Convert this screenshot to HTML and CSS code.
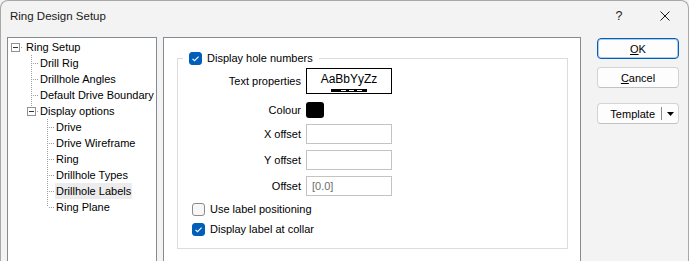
FILE: index.html
```html
<!doctype html>
<html lang="en">
    <head>
        <meta charset="UTF-8" />
        <meta name="viewport" content="width=device-width, initial-scale=1.0" />
        <title>Ring Design Setup</title>
        <link rel="stylesheet" href="styles.css">
    </head>
    <body>
        <div class="window">
            <div class="titlebar">
                <span class="title">Ring Design Setup</span>
                <span class="caption-btn help">?</span>
                <span class="caption-btn close">
                    <svg width="10" height="10" viewBox="0 0 10 10">
                        <path d="M0.5 0.5 L9.5 9.5 M9.5 0.5 L0.5 9.5" stroke="#1a1a1a" stroke-width="1" fill="none" />
                    </svg>
                </span>
            </div>

            <div class="content">
                <!-- Options tree -->
                <div class="tree">
                    <div class="node root"><span class="cell"><span class="expander"></span></span><span class="label">Ring Setup</span></div>
                    <div class="node"><span class="cell"></span><span class="cell tee"></span><span class="label">Drill Rig</span></div>
                    <div class="node"><span class="cell"></span><span class="cell tee"></span><span class="label">Drillhole Angles</span></div>
                    <div class="node"><span class="cell"></span><span class="cell tee"></span><span class="label">Default Drive Boundary</span></div>
                    <div class="node"><span class="cell"></span><span class="cell ell"><span class="expander"></span></span><span class="label">Display options</span></div>
                    <div class="node"><span class="cell"></span><span class="cell"></span><span class="cell tee"></span><span class="label">Drive</span></div>
                    <div class="node"><span class="cell"></span><span class="cell"></span><span class="cell tee"></span><span class="label">Drive Wireframe</span></div>
                    <div class="node"><span class="cell"></span><span class="cell"></span><span class="cell tee"></span><span class="label">Ring</span></div>
                    <div class="node"><span class="cell"></span><span class="cell"></span><span class="cell tee"></span><span class="label">Drillhole Types</span></div>
                    <div class="node"><span class="cell"></span><span class="cell"></span><span class="cell tee"></span><span class="label selected">Drillhole Labels</span></div>
                    <div class="node"><span class="cell"></span><span class="cell"></span><span class="cell ell"></span><span class="label">Ring Plane</span></div>
                </div>

                <!-- Page: Drillhole Labels -->
                <div class="page">
                    <fieldset class="group">
                        <legend>
                            <span class="check checked">
                                <svg width="13" height="13" viewBox="0 0 13 13">
                                    <path d="M3.5 6.8 L5.5 8.7 L9.6 4.6" stroke="#fff" stroke-width="1.1" fill="none" />
                                </svg>
                            </span>
                            <span>Display hole numbers</span>
                        </legend>

                        <div class="row row-font">
                            <span class="row-label">Text properties</span>
                            <div class="font-preview">
                                <span class="sample">AaBbYyZz</span>
                                <svg width="36" height="3" viewBox="0 0 36 3">
                                    <rect x="0" y="0" width="36" height="3" fill="#000" />
                                    <rect x="10" y="1" width="5" height="1" fill="#fff" />
                                    <rect x="18" y="1" width="5" height="1" fill="#fff" />
                                    <rect x="26" y="1" width="5" height="1" fill="#fff" />
                                </svg>
                            </div>
                        </div>

                        <div class="row row-colour">
                            <span class="row-label">Colour</span>
                            <span class="swatch"></span>
                        </div>

                        <div class="row row-input">
                            <span class="row-label">X offset</span>
                            <input class="field" type="text" value="" />
                        </div>

                        <div class="row row-input">
                            <span class="row-label">Y offset</span>
                            <input class="field" type="text" value="" />
                        </div>

                        <div class="row row-input">
                            <span class="row-label">Offset</span>
                            <input class="field muted" type="text" value="[0.0]" />
                        </div>

                        <div class="check-row first">
                            <span class="check"></span>
                            <span>Use label positioning</span>
                        </div>

                        <div class="check-row">
                            <span class="check checked">
                                <svg width="13" height="13" viewBox="0 0 13 13">
                                    <path d="M3.5 6.8 L5.5 8.7 L9.6 4.6" stroke="#fff" stroke-width="1.1" fill="none" />
                                </svg>
                            </span>
                            <span>Display label at collar</span>
                        </div>
                    </fieldset>
                </div>

                <!-- Dialog buttons -->
                <div class="actions">
                    <button class="btn default"><u>O</u>K</button>
                    <button class="btn cancel"><u>C</u>ancel</button>
                    <button class="btn template">
                        <span class="template-text">Template</span>
                        <span class="split"></span>
                        <span class="arrow">
                            <svg width="7" height="4" viewBox="0 0 7 4">
                                <path d="M0 0 L7 0 L3.5 4 Z" fill="#000" />
                            </svg>
                        </span>
                    </button>
                </div>
            </div>
        </div>
    </body>
</html>
```

FILE: styles.css
```css
html,
body {
    margin: 0;
    width: 689px;
    height: 261px;
    overflow: hidden;
}

body {
    font-family: "Liberation Sans", Arial, sans-serif;
    font-size: 11px;
    color: #000;
    background: #f3f3f3;
}

.window {
    box-sizing: border-box;
    width: 689px;
    height: 261px;
    overflow: hidden;
    border: 1px solid #a8a8a8;
    border-bottom: none;
    border-radius: 8px 8px 0 0;
    background: #f3f3f3;
}

.titlebar {
    display: flex;
    align-items: center;
    height: 29px;
    padding-left: 9px;
}

.title {
    flex: 1;
    font-size: 11.5px;
    color: #1a1a1a;
}

.caption-btn {
    display: flex;
    align-items: center;
    justify-content: center;
    width: 46px;
    height: 29px;
    font-size: 12.5px;
    color: #1a1a1a;
}

.content {
    display: flex;
    align-items: flex-start;
    padding: 7px 0 0 6px;
}

/* tree */

.tree {
    box-sizing: border-box;
    width: 150px;
    height: 240px;
    border: 1px solid #868a91;
    background: #fff;
    padding-top: 1px;
}

.node {
    display: flex;
    align-items: center;
    height: 16px;
}

.cell {
    flex: none;
    display: flex;
    align-items: center;
    width: 16px;
    height: 16px;
}

.cell:first-child {
    width: 15px;
}

.root .cell {
    background: repeating-linear-gradient(to right, #a0a0a0 0 1px, transparent 1px 2px) 13px 8px / 2px 1px no-repeat;
}

.root .expander {
    margin-left: 3px;
}

.root .label {
    padding-left: 3px;
}

.tee {
    background:
        repeating-linear-gradient(to bottom, #a0a0a0 0 1px, transparent 1px 2px) 8px 0 / 1px 16px no-repeat,
        repeating-linear-gradient(to right, #a0a0a0 0 1px, transparent 1px 2px) 10px 8px / 6px 1px no-repeat;
}

.ell {
    background:
        repeating-linear-gradient(to bottom, #a0a0a0 0 1px, transparent 1px 2px) 8px 0 / 1px 8px no-repeat,
        repeating-linear-gradient(to right, #a0a0a0 0 1px, transparent 1px 2px) 10px 8px / 6px 1px no-repeat;
}

.ell .expander {
    margin-left: 4px;
}

.expander {
    box-sizing: border-box;
    width: 9px;
    height: 9px;
    border: 1px solid #919191;
    background: #fff linear-gradient(#333, #333) center / 5px 1px no-repeat;
}

.label {
    line-height: 16px;
    padding: 0 1px;
    white-space: nowrap;
}

.label.selected {
    background: #ececec;
}

/* page */

.page {
    box-sizing: border-box;
    width: 418px;
    height: 240px;
    margin-left: 6px;
    border: 1px solid #868a91;
    background: #fff;
    padding-top: 12px;
}

.group {
    margin: 0 12px 0 13px;
    padding: 0 0 9px 0;
    border: 1px solid #dcdcdc;
    min-width: 0;
}

.group legend {
    display: flex;
    align-items: center;
    gap: 5px;
    height: 16px;
    margin-left: 5px;
    padding: 0 6px;
}

.check {
    box-sizing: border-box;
    display: block;
    width: 13px;
    height: 13px;
    border: 1px solid #8a8a8a;
    border-radius: 3px;
    background: #f7f7f7;
}

.check svg {
    display: block;
    margin: -1px;
}

.check.checked {
    border-color: #005fb8;
    background: #005fb8;
}

.row {
    display: flex;
    align-items: center;
    gap: 5px;
}

.row-label {
    width: 123px;
    text-align: right;
    white-space: nowrap;
}

.row-font {
    height: 26px;
    margin-top: 2px;
}

.row-colour {
    height: 16px;
    margin-top: 8px;
}

.row-input {
    height: 20px;
    margin-top: 6px;
}

.font-preview {
    box-sizing: border-box;
    display: flex;
    flex-direction: column;
    align-items: center;
    width: 86px;
    height: 26px;
    border: 1px solid #000;
    padding-top: 3px;
}

.sample {
    font-size: 12px;
    line-height: 14px;
}

.font-preview svg {
    display: block;
    margin-top: 3px;
}

.swatch {
    display: block;
    width: 18px;
    height: 16px;
    border-radius: 3px;
    background: #000;
}

.field {
    box-sizing: border-box;
    width: 86px;
    height: 20px;
    margin: 0;
    padding: 0 5px;
    border: 1px solid #c3c3c3;
    border-radius: 0;
    background: #fff;
    font: inherit;
    color: #000;
    outline: none;
}

.field.muted {
    color: #6d6d6d;
}

.check-row {
    display: flex;
    align-items: center;
    gap: 5px;
    height: 20px;
    padding-left: 14px;
}

.check-row.first {
    margin-top: 3px;
}

/* buttons */

.actions {
    display: flex;
    flex-direction: column;
    margin-left: 16px;
    padding-top: 1px;
}

.btn {
    box-sizing: border-box;
    width: 82px;
    height: 21px;
    margin: 0;
    padding: 0;
    border: 1px solid #d3d3d3;
    border-bottom-color: #c2c2c2;
    border-radius: 4px;
    background: #fdfdfd;
    font: inherit;
    color: #000;
}

.btn.default {
    border-color: #005fb8;
    box-shadow: inset 0 0 0 1px rgba(0, 95, 184, 0.3);
}

.btn.cancel {
    margin-top: 8px;
}

.btn.template {
    display: flex;
    align-items: center;
    margin-top: 15px;
}

.template-text {
    flex: 1;
    text-align: right;
    padding-right: 6px;
}

.split {
    width: 1px;
    height: 13px;
    background: #8a8a8a;
}

.arrow {
    display: flex;
    justify-content: center;
    width: 16px;
}

.arrow svg {
    display: block;
}
```
